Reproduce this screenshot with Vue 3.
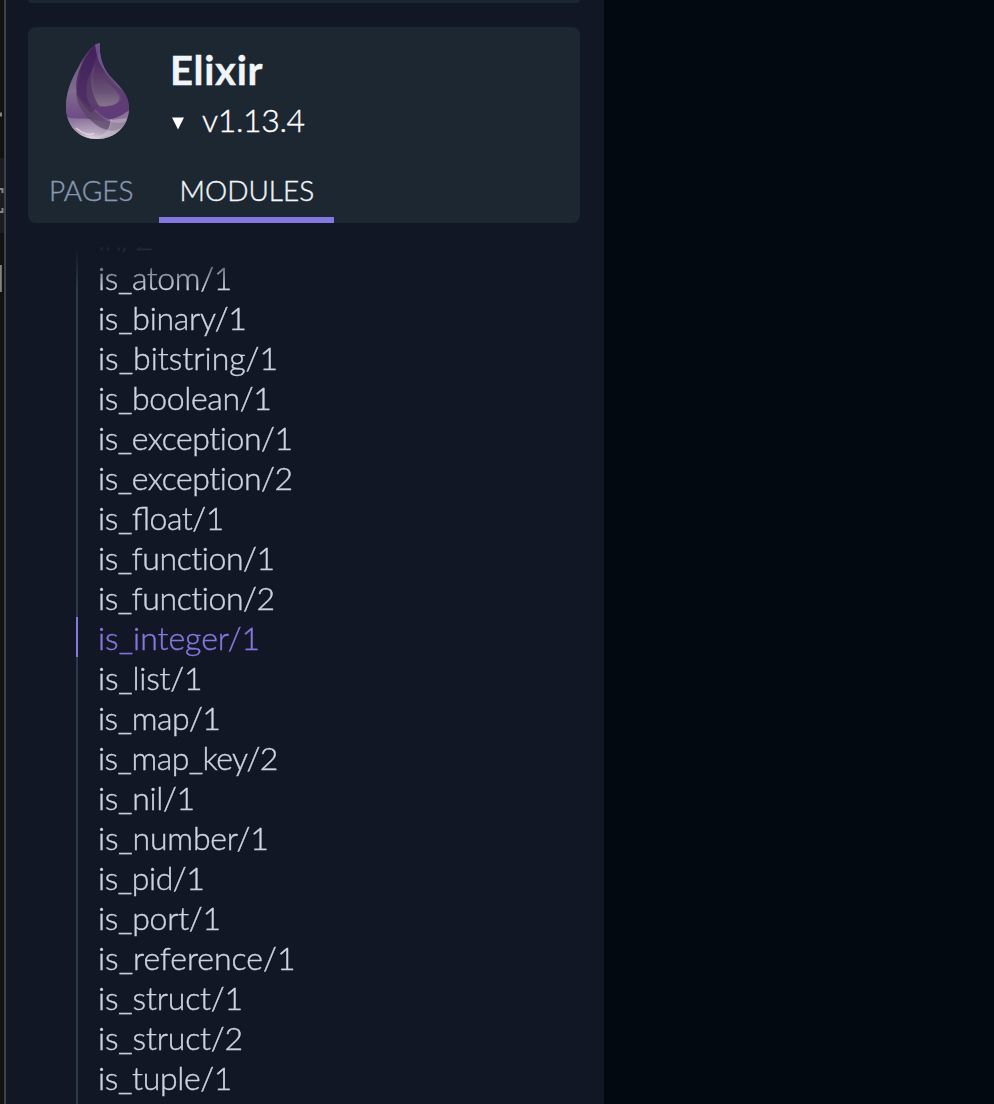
<script setup>
const functions = [
  { name: 'in/2', tracking: -0.5 },
  { name: 'is_atom/1', tracking: -0.4 },
  { name: 'is_binary/1', tracking: -0.28 },
  { name: 'is_bitstring/1', tracking: -0.02 },
  { name: 'is_boolean/1', tracking: -0.37 },
  { name: 'is_exception/1', tracking: -0.45 },
  { name: 'is_exception/2', tracking: -0.45 },
  { name: 'is_float/1', tracking: -0.42 },
  { name: 'is_function/1', tracking: -0.43 },
  { name: 'is_function/2', tracking: -0.43 },
  { name: 'is_integer/1', tracking: -0.03 },
  { name: 'is_list/1', tracking: -0.22 },
  { name: 'is_map/1', tracking: -0.5 },
  { name: 'is_map_key/2', tracking: -0.55 },
  { name: 'is_nil/1', tracking: -0.32 },
  { name: 'is_number/1', tracking: -0.2 },
  { name: 'is_pid/1', tracking: -0.45 },
  { name: 'is_port/1', tracking: -0.3 },
  { name: 'is_reference/1', tracking: -0.02 },
  { name: 'is_struct/1', tracking: -0.2 },
  { name: 'is_struct/2', tracking: -0.2 },
  { name: 'is_tuple/1', tracking: -0.35 },
]
const current = 'is_integer/1'
</script>

<template>
  <div class="page">
    <div class="edge">
      <div class="edge-row"></div>
      <svg class="edge-marks" width="4" height="300" viewBox="0 0 4 300">
        <path d="M0 112.500h2v4H0z" fill="#85857f" />
        <path d="M0 189h2.500v4M0 212h2.500v-4" fill="none" stroke="#85857f" stroke-width="2" />
        <path d="M0 265h1.800v27H0z" fill="#85857f" />
      </svg>
    </div>
    <aside class="sidebar">
      <div class="search"></div>
      <header class="card">
        <div class="project">
          <svg class="logo" width="66" height="98" viewBox="0 0 66 98">
            <defs>
              <linearGradient id="body" x1="0" y1="0" x2="0" y2="1">
                <stop offset="0" stop-color="#54386c" />
                <stop offset=".45" stop-color="#684b7c" />
                <stop offset=".75" stop-color="#76538b" />
                <stop offset="1" stop-color="#a99bb4" />
              </linearGradient>
              <linearGradient id="left" x1="0" y1="0" x2="0" y2="1">
                <stop offset="0" stop-color="#6c5a7a" />
                <stop offset=".55" stop-color="#806b8e" />
                <stop offset="1" stop-color="#6d4785" />
              </linearGradient>
              <linearGradient id="center" x1="0" y1="0" x2="0" y2="1">
                <stop offset="0" stop-color="#452260" />
                <stop offset=".4" stop-color="#523364" />
                <stop offset=".75" stop-color="#675174" />
                <stop offset="1" stop-color="#85758e" />
              </linearGradient>
              <radialGradient id="shine" cx=".4" cy="1" r=".75">
                <stop offset="0" stop-color="#e8e3eb" />
                <stop offset=".35" stop-color="#b5a7bd" />
                <stop offset="1" stop-color="#8b729b" />
              </radialGradient>
              <clipPath id="drop">
                <path d="M31 2C25 6 19 14 13 26C6 38 1 51 1 65C1 84 14 97 32 97C50 97 64 84 64 66C64 52 54 44 44 33C37 24 34 12 35 1Z" />
              </clipPath>
            </defs>
            <g clip-path="url(#drop)">
              <path d="M0 0h66v98H0z" fill="url(#body)" />
              <path d="M19 14C4 36 -2 52 0 76C8 80 16 79 27 77C16 70 11 62 12 48C13 36 15 26 19 14Z" fill="url(#left)" />
              <path d="M30 3C13 22 11 45 22 57C30 65 43 66 53 61C62 54 52 43 42 34L34 18Z" fill="url(#center)" />
              <path d="M29 3C14 22 9 39 12 52C16 60 20 66 26 71L34 64C25 50 22 31 34 10Z" fill="#43205b" opacity=".72" />
              <path d="M31 22C26 37 28 50 34 64L27 68C18 52 20 36 31 22Z" fill="#705c7c" opacity=".3" />
              <path d="M36 29C46 45 57 44 64 57C66 68 61 76 49 79C39 77 33 71 28 64C46 68 57 61 54 53C50 45 41 41 35 27Z" fill="#5b3673" opacity=".7" />
              <path d="M0 75C12 78 20 75 29 78C42 81 55 74 65 68V98H0Z" fill="url(#shine)" />
              <path d="M29 64C43 67 57 63 64 54V68C55 75 49 78 41 76Z" fill="#5f3c75" opacity=".85" />
              <path d="M11 50C18 62 27 66 38 76C44 80 54 83 62 79C54 92 43 90 33 84C22 76 13 67 11 52Z" fill="#544060" opacity=".65" />
              <path d="M46 78C46 87 40 94 33 95L48 94C57 90 61 85 62 76Z" fill="#ddd7df" opacity=".4" />
              <path d="M30 1C31 17 36 25 43 33C49 40 56 46 62 55C57 40 42 31 37 20L35 0Z" fill="#8466a0" opacity=".55" />
              <path d="M11 86C18 92 25 94 29 91" fill="none" stroke="#eee8f1" stroke-width="1.500" opacity=".65" />
              <path d="M46 77C46 86 41 92 33 95" fill="none" stroke="#ded2e2" stroke-width="1" opacity=".5" />
            </g>
          </svg>
          <div class="identity">
            <h1>Elixir</h1>
            <div class="version">
              <svg width="12" height="13" viewBox="0 0 12 13"><path d="M0 .5h12L6 12.500z" fill="#fff" /></svg>
              <span>v1.13.4</span>
            </div>
          </div>
        </div>
        <nav class="tabs">
          <span class="tab">PAGES</span>
          <span class="tab active">MODULES</span>
        </nav>
      </header>
      <div class="list-view">
        <ul class="list">
          <li
            v-for="item in functions"
            :key="item.name"
            :class="{ current: item.name === current, ligated: item.name.includes('fl') }"
            :style="{ letterSpacing: item.tracking + 'px' }"
          >{{ item.name }}</li>
        </ul>
      </div>
    </aside>
    <main class="content"></main>
  </div>
</template>

<style>
body { margin: 0; background: #030910; }
</style>

<style scoped>
.page { display: flex; width: 994px; height: 1104px; overflow: hidden; font-family: Lato, sans-serif; font-weight: 300; background: #030910; -webkit-text-stroke: .4px currentColor; }
.edge { position: relative; box-sizing: border-box; width: 6px; flex: none; background: #11110f; border-right: 2px solid #3e414b; padding-top: 158px; }
.edge-row { height: 75px; background: #1c1c1e; }
.edge-marks { position: absolute; left: 0; top: 0; }
.sidebar { box-sizing: border-box; width: 598px; flex: none; padding: 0 24px 0 22px; background: #111724; display: flex; flex-direction: column; }
.search { height: 3px; flex: none; background: #1c2630; border-radius: 0 0 8px 8px; }
.card { height: 196px; flex: none; margin-top: 24px; background: #1d2731; border-radius: 8px; display: flex; flex-direction: column; justify-content: space-between; }
.project { display: flex; padding: 15px 0 0 37px; }
.logo { flex: none; }
.identity { margin-left: 39px; }
h1 { margin: 3px 0 0; font-size: 40px; line-height: 50px; font-weight: 700; letter-spacing: .7px; color: #f0f5f9; }
.version { display: flex; align-items: center; gap: 18px; margin: 5px 0 0 2px; font-size: 32px; line-height: 40px; letter-spacing: -.35px; color: #fff; }
.version svg { margin-top: 7px; }
.tabs { display: flex; height: 64px; }
.tab { box-sizing: border-box; height: 64px; padding: 11px 20px 0 21px; border-bottom: 6px solid transparent; font-size: 28px; line-height: 40px; color: #8699b0; }
.tab.active { margin-left: 5px; color: #f0f5f9; border-color: #8577e0; }
.list-view { flex: 1; min-height: 0; overflow: hidden; margin-top: 24px; -webkit-mask-image: linear-gradient(rgba(0, 0, 0, .04), #000 42px); mask-image: linear-gradient(rgba(0, 0, 0, .04), #000 42px); }
.list { list-style: none; margin: -30px 0 0 48px; padding: 0; }
li { box-sizing: border-box; padding: 1px 0 0 20px; height: 40px; border-left: 2px solid #2b3948; font-size: 32px; line-height: 40px; color: #cad5e0; white-space: nowrap; }
li.ligated { font-feature-settings: 'liga' 1; }
li:last-child { height: 48px; }
li.current { color: #8577e0; border-color: #8577e0; }
.content { flex: 1; }
</style>
